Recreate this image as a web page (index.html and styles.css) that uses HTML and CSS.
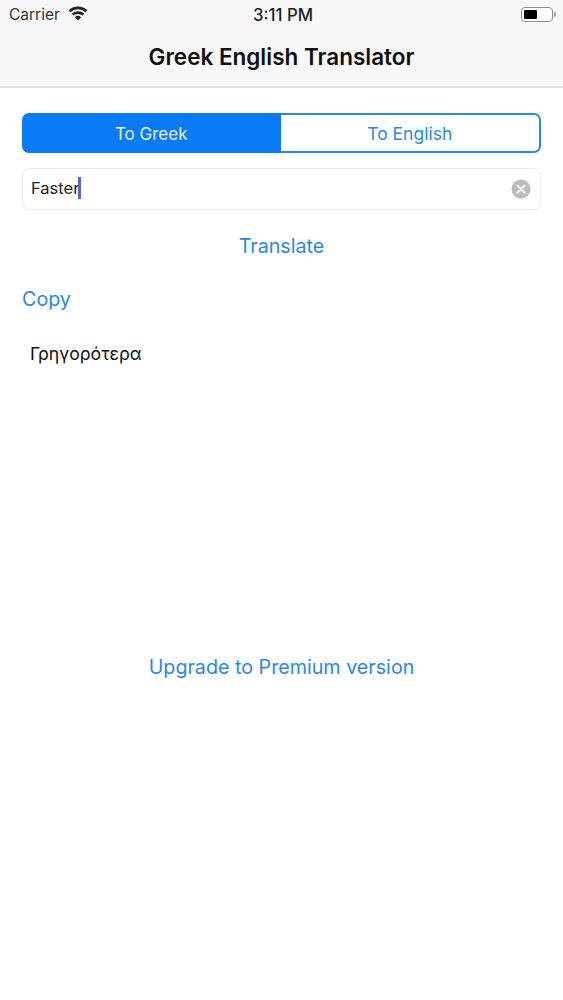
FILE: index.html
```html
<!DOCTYPE html>
<html lang="en">
<head>
<meta charset="utf-8">
<title>Greek English Translator</title>
<link rel="stylesheet" href="styles.css">
</head>
<body>
<header class="bar">
  <div class="status">
    <div class="status-left">
      <span class="carrier">Carrier</span>
      <svg class="wifi" width="20" height="15" viewBox="0 0 20 15"><path d="M10 14.600 6.900 11.200a4.600 4.600 0 0 1 6.200 0Z" fill="#222"/><path d="M5.500 9.600 3.700 7.700a9.400 9.400 0 0 1 12.600 0l-1.800 1.900a6.800 6.800 0 0 0-9 0Z" fill="#222"/><path d="M2.400 6.300.5 4.300a14 14 0 0 1 19 0l-1.900 2a11.300 11.300 0 0 0-15.200 0Z" fill="#222"/></svg>
    </div>
    <span class="time">3:11 PM</span>
    <div class="battery"><div class="battery-body"><div class="battery-fill"></div></div><div class="battery-tip"></div></div>
  </div>
  <h1 class="title">Greek English Translator</h1>
</header>
<main class="content">
  <div class="segmented">
    <div class="segment active">To Greek</div>
    <div class="segment">To English</div>
  </div>
  <div class="field">
    <span class="field-text">Faster</span><span class="caret"></span>
    <svg class="clear" width="20" height="20" viewBox="0 0 20 20"><circle cx="10" cy="10" r="9.500" fill="#bcbcbc"/><path d="M6.500 6.500l7 7M13.500 6.500l-7 7" stroke="#fff" stroke-width="2" stroke-linecap="round"/></svg>
  </div>
  <div class="translate link">Translate</div>
  <div class="copy link">Copy</div>
  <div class="result">Γρηγορότερα</div>
  <div class="upgrade link">Upgrade to Premium version</div>
</main>
</body>
</html>
```
FILE: styles.css
```css
* { box-sizing: border-box; }
html, body { margin: 0; padding: 0; }
body {
  width: 563px;
  height: 1000px;
  background: #fff;
  font-family: Inter, "Liberation Sans", sans-serif;
  overflow: hidden;
}
.bar {
  height: 88px;
  background: #f8f8fa;
  border-bottom: 2px solid #e2e2e4;
}
.status {
  height: 29px;
  padding: 0 7px 0 9px;
  display: flex;
  align-items: center;
  justify-content: space-between;
  position: relative;
  color: #222;
}
.status-left { display: flex; align-items: center; gap: 8px; }
.carrier { font-size: 15.500px; color: #333; }
.wifi { margin-top: -3px; }
.time {
  position: absolute;
  left: 3px;
  right: 0;
  text-align: center;
  font-size: 16.800px;
  font-weight: 500;
}
.battery { display: flex; align-items: center; margin-left: auto; }
.battery-body {
  width: 32px;
  height: 15px;
  border: 1px solid #8e8e8e;
  border-radius: 4px;
  padding: 2px;
  background: #fff;
}
.battery-fill { width: 13px; height: 100%; background: #000; border-radius: 1px; }
.battery-tip { width: 2px; height: 5px; background: #a0a0a0; border-radius: 0 2px 2px 0; margin-left: 1px; }
.title {
  margin: 0;
  padding-top: 1px;
  text-align: center;
  font-size: 22.500px;
  line-height: 54px;
  font-weight: 600;
  color: #111;
}
.content {
  padding: 25px 22px 0;
  display: flex;
  flex-direction: column;
}
.segmented {
  display: flex;
  height: 40px;
}
.segment {
  flex: 1 1 0;
  display: flex;
  align-items: center;
  justify-content: center;
  font-size: 17.500px;
  color: #2b88e2;
  background: #fff;
  border: 2px solid #2b88e2;
  border-left: 0;
  border-radius: 0 7px 7px 0;
}
.segment.active {
  background: #0a7bf5;
  color: #e4f1ff;
  font-size: 17px;
  border: 0;
  border-radius: 7px 0 0 7px;
  padding-top: 1px;
}
.field {
  margin-top: 15px;
  height: 42px;
  border: 1px solid #ececee;
  border-radius: 8px;
  padding: 0 9px 2px 8px;
  display: flex;
  align-items: center;
  font-size: 16.500px;
  color: #222;
}
.caret {
  width: 2.500px;
  height: 22px;
  background: #5468d8;
  margin-left: -1px;
}
.clear { margin-top: 2px; margin-left: auto; }
.link { color: #2b88e2; font-size: 19.700px; }
.translate { margin-top: 24px; text-align: center; line-height: 24px; }
.copy { margin-top: 29px; line-height: 24px; }
.result {
  margin-top: 31px;
  padding-left: 8px;
  font-size: 17.700px;
  line-height: 24px;
  color: #111;
}
.upgrade { margin-top: 289px; text-align: center; line-height: 24px; }
```
